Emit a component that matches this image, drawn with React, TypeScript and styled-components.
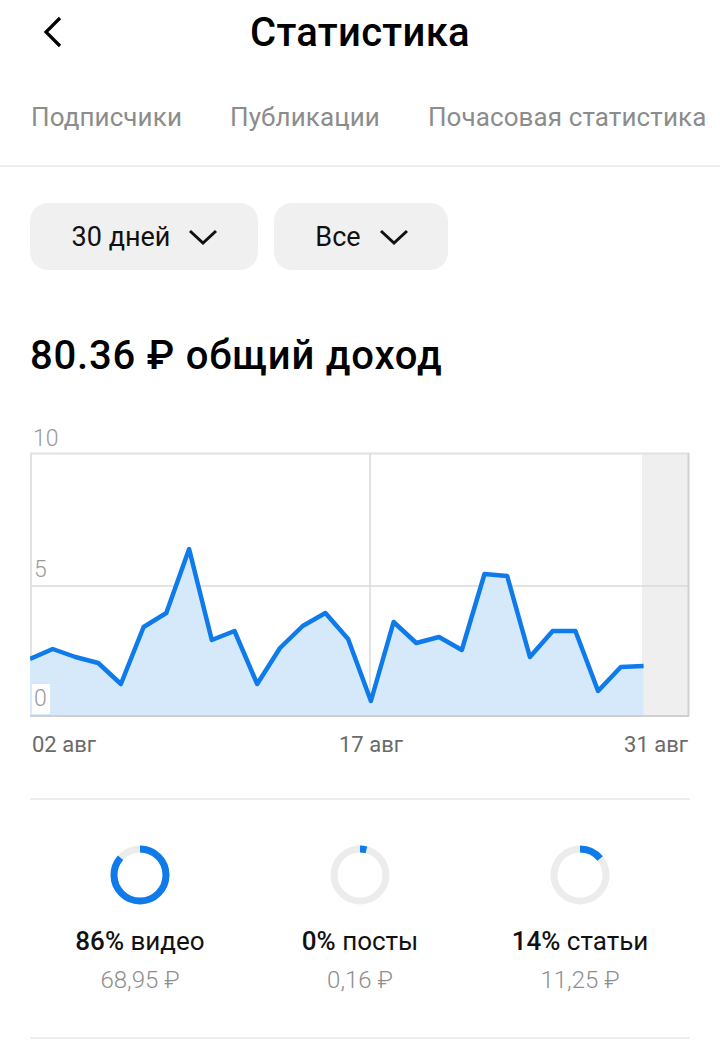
import React from 'react';
import styled, { createGlobalStyle } from 'styled-components';

const GlobalStyle = createGlobalStyle`
  body {
    margin: 0;
    background: #fff;
    font-family: Roboto, 'Noto Sans', sans-serif;
    color: #111;
  }
`;

const Page = styled.div`
  width: 720px;
  min-height: 1046px;
  background: #fff;
  overflow: hidden;
`;

const Header = styled.div`
  position: relative;
  height: 64px;
  display: flex;
  align-items: center;
  justify-content: center;
`;

const BackButton = styled.button`
  position: absolute;
  left: 36px;
  top: 14px;
  width: 32px;
  height: 36px;
  border: 0;
  background: none;
  padding: 0;
  display: flex;
  align-items: center;
  justify-content: center;
`;

const Title = styled.h1`
  margin: 0;
  font-size: 40px;
  font-weight: 500;
  letter-spacing: 0.3px;
  color: #000;
`;

const Tabs = styled.div`
  display: flex;
  gap: 48px;
  padding: 102px 0 0 31px;
  margin-top: -64px;
  height: 167px;
  box-sizing: border-box;
  border-bottom: 2px solid #ececec;
  white-space: nowrap;
`;

const Tab = styled.span`
  font-size: 26px;
  color: #8c8c8c;
  letter-spacing: 0.1px;
`;

const Content = styled.div`
  padding: 0 30px;
`;

const Filters = styled.div`
  display: flex;
  gap: 16px;
  padding-top: 36px;
`;

const Pill = styled.button<{ $w: number }>`
  width: ${(p) => p.$w}px;
  height: 67px;
  border: 0;
  border-radius: 18px;
  background: #f0f0f0;
  display: flex;
  align-items: center;
  justify-content: center;
  gap: 18px;
  font-family: Roboto, sans-serif;
  font-size: 27px;
  color: #111;
  padding: 0 0 0 2px;
`;

const Total = styled.h2`
  margin: 62px 0 0;
  font-size: 40px;
  font-weight: 500;
  color: #000;
  line-height: 48px;
  letter-spacing: 0.8px;
`;

const ChartWrap = styled.div`
  margin-top: 40px;
  height: 340px;
`;

const Divider = styled.div<{ $top?: number }>`
  height: 2px;
  background: #ededed;
  margin-top: ${(p) => p.$top ?? 0}px;
`;

const Shares = styled.div`
  display: grid;
  grid-template-columns: repeat(3, 1fr);
  margin: 44px -30px 0;
  padding: 0 30px;
  height: 193px;
`;

const Share = styled.div`
  display: flex;
  flex-direction: column;
  align-items: center;
`;

const ShareLabel = styled.div`
  margin-top: 20px;
  font-size: 26px;
  font-weight: 400;
  color: #111;
  line-height: 30px;
  b {
    font-weight: 500;
  }
`;

const ShareAmount = styled.div`
  margin-top: 10px;
  font-size: 24px;
  font-weight: 300;
  color: #8e8e8e;
`;

const Chevron = () => (
  <svg width="30" height="18" viewBox="0 0 30 18">
    <path d="M2 3 L15 15 L28 3" fill="none" stroke="#111" strokeWidth="3" />
  </svg>
);

const values = [239, 229, 237, 243, 264, 207, 193, 129, 220, 211, 264, 228, 206, 193, 219, 281, 202, 223, 217, 230, 154, 156, 237, 211, 211, 271, 247, 246];

const Chart = () => {
  const step = 659 / 29;
  const pts = values.map((y, i) => `${(i * step).toFixed(1)},${y}`);
  const line = 'M' + pts.join(' L');
  const area = `${line} L${((values.length - 1) * step).toFixed(1)},296 L0,296 Z`;
  const axis = { fontSize: 23, fontWeight: 300, fill: '#9a9a9a', fontFamily: 'Roboto, sans-serif' };
  const xl = { fontSize: 22, fill: '#6a6a6a', fontFamily: 'Roboto, sans-serif' };
  return (
    <svg width="660" height="340" viewBox="0 0 660 340">
      <rect x="612" y="33" width="47" height="263" fill="#efefef" />
      <line x1="0" y1="33.5" x2="659" y2="33.5" stroke="#e2e2e2" strokeWidth="2" />
      <line x1="0" y1="166" x2="659" y2="166" stroke="#dadada" strokeWidth="1.5" />
      <line x1="340" y1="33" x2="340" y2="296" stroke="#dadada" strokeWidth="1.5" />
      <line x1="1" y1="33" x2="1" y2="296" stroke="#e2e2e2" strokeWidth="2" />
      <line x1="658.5" y1="33" x2="658.5" y2="296" stroke="#d2d2d2" strokeWidth="2" />
      <path d={area} fill="#d6e9fb" />
      <path d={line} fill="none" stroke="#0f7bea" strokeWidth="4.5" strokeLinejoin="round" />
      <line x1="0" y1="296" x2="659" y2="296" stroke="#cfcfcf" strokeWidth="2" />
      <text x="3" y="26" style={axis}>10</text>
      <text x="4" y="157" style={axis}>5</text>
      <rect x="2" y="264" width="18" height="30" fill="#fff" />
      <text x="4" y="286" style={axis}>0</text>
      <text x="2" y="332" style={xl}>02 авг</text>
      <text x="341" y="332" textAnchor="middle" style={xl}>17 авг</text>
      <text x="658" y="332" textAnchor="end" style={xl}>31 авг</text>
    </svg>
  );
};

const Donut = ({ pct }: { pct: number }) => {
  const r = 26;
  const c = 2 * Math.PI * r;
  const shown = Math.max(pct, 4);
  const dash = (shown / 100) * c;
  return (
    <svg width="62" height="62" viewBox="0 0 62 62">
      <circle cx="31" cy="31" r={r} fill="none" stroke="#ececec" strokeWidth="7" />
      <circle
        cx="31"
        cy="31"
        r={r}
        fill="none"
        stroke="#0f7bea"
        strokeWidth="7"
        strokeDasharray={`${dash} ${c}`}
        transform="rotate(-90 31 31)"
      />
    </svg>
  );
};

const shares = [
  { pct: 86, name: 'видео', amount: '68,95 ₽' },
  { pct: 0, name: 'посты', amount: '0,16 ₽' },
  { pct: 14, name: 'статьи', amount: '11,25 ₽' },
];

export default function App() {
  return (
    <Page>
      <GlobalStyle />
      <Header>
        <BackButton>
          <svg width="22" height="32" viewBox="0 0 22 32">
            <path d="M19 2 L5 16 L19 30" fill="none" stroke="#000" strokeWidth="3.2" />
          </svg>
        </BackButton>
        <Title>Статистика</Title>
      </Header>
      <Tabs>
        <Tab>Подписчики</Tab>
        <Tab>Публикации</Tab>
        <Tab>Почасовая статистика</Tab>
      </Tabs>
      <Content>
        <Filters>
          <Pill $w={228}>
            30 дней <Chevron />
          </Pill>
          <Pill $w={174}>
            Все <Chevron />
          </Pill>
        </Filters>
        <Total>80.36 ₽ общий доход</Total>
        <ChartWrap>
          <Chart />
        </ChartWrap>
        <Divider $top={38} />
        <Shares>
          {shares.map((s) => (
            <Share key={s.name}>
              <Donut pct={s.pct} />
              <ShareLabel>
                <b>{s.pct}%</b> {s.name}
              </ShareLabel>
              <ShareAmount>{s.amount}</ShareAmount>
            </Share>
          ))}
        </Shares>
        <Divider />
      </Content>
    </Page>
  );
}
